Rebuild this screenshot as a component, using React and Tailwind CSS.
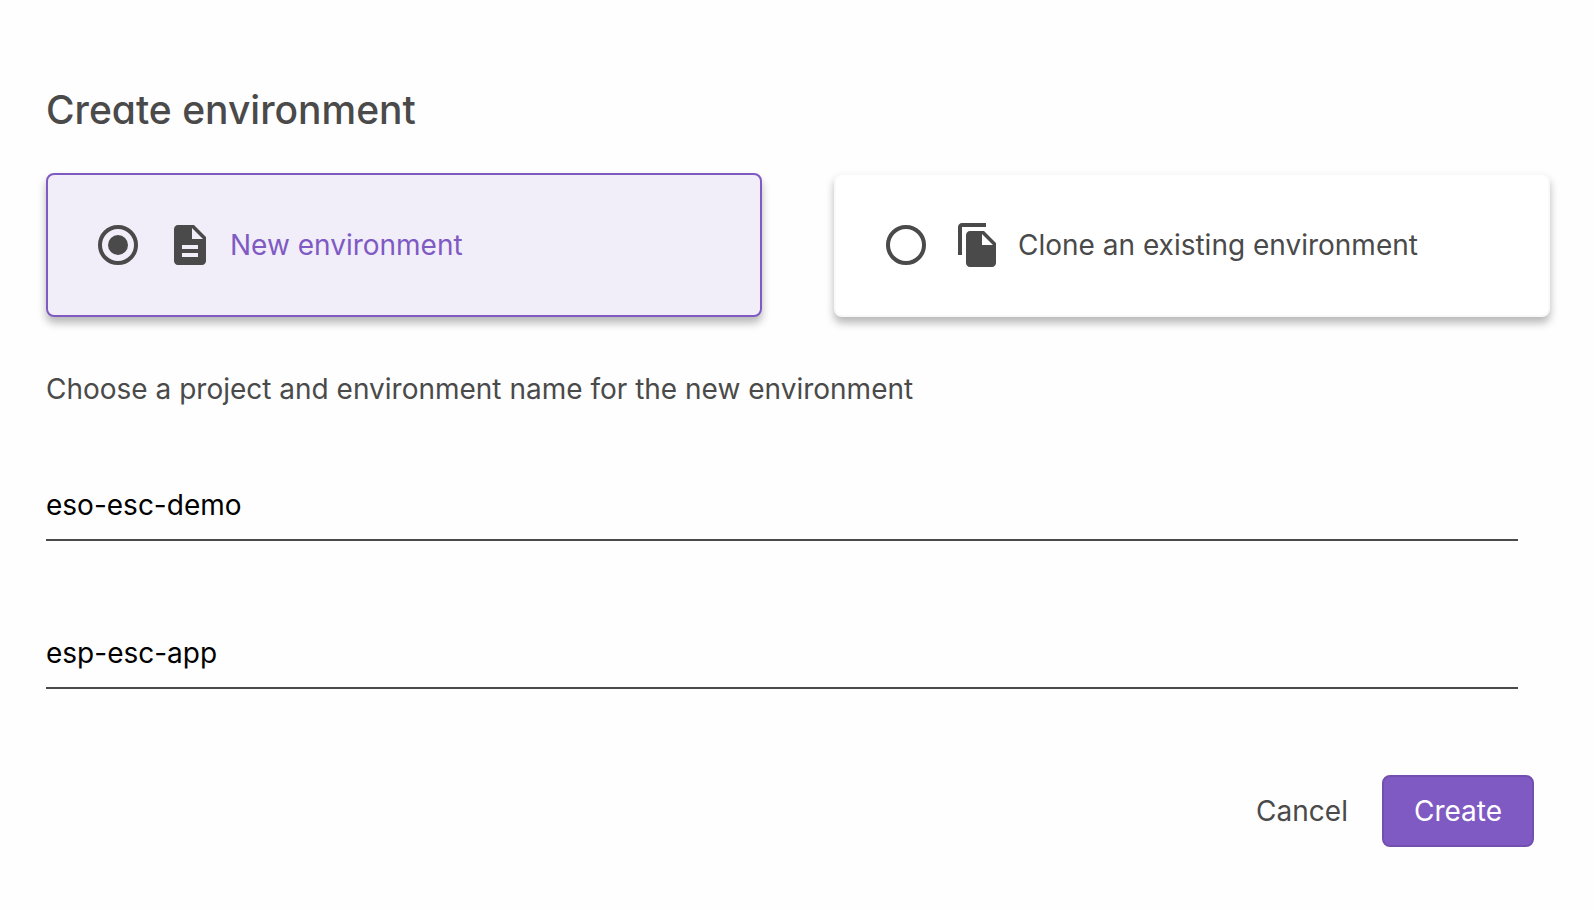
import { useState } from "react";
import { MdDescription, MdFileCopy } from "react-icons/md";

const MODES = [
  { id: "new", label: "New environment", Icon: MdDescription },
  { id: "clone", label: "Clone an existing environment", Icon: MdFileCopy },
];

function ModeCard({ mode, checked, onSelect }) {
  const { id, label, Icon } = mode;
  return (
    <label
      className={`flex flex-1 cursor-pointer items-center rounded-lg border-2 p-[46px] shadow-[0_6px_8px_0_rgba(0,0,0,0.28)] ${
        checked ? "border-[#805ac3] bg-[#f1eefa] text-[#805ac3]" : "border-[#f9f9f9] bg-white text-[#4a4a4a]"
      }`}
    >
      <input
        type="radio"
        name="mode"
        value={id}
        checked={checked}
        onChange={() => onSelect(id)}
        className="m-1 size-10 shrink-0 appearance-none rounded-full border-4 border-[#4a4a4a] bg-clip-content p-1.5 checked:bg-[#4a4a4a]"
      />
      <Icon className="ml-6 size-12 shrink-0 text-[#4a4a4a]" aria-hidden="true" />
      <span className="ml-4">{label}</span>
    </label>
  );
}

function Field({ label, value, onChange }) {
  return (
    <input
      type="text"
      aria-label={label}
      value={value}
      onChange={(e) => onChange(e.target.value)}
      className="block h-18 w-full border-b-2 border-[#4a4a4a] bg-transparent pt-0.5 text-black outline-none"
    />
  );
}

export default function App() {
  const [mode, setMode] = useState("new");
  const [project, setProject] = useState("eso-esc-demo");
  const [name, setName] = useState("esp-esc-app");

  return (
    <form
      onSubmit={(e) => e.preventDefault()}
      className="min-h-screen bg-[#fefefe] pt-[86px] pr-11 pl-[46px] font-['Inter',sans-serif] text-[28px] leading-10 text-[#4a4a4a]"
    >
      <h1 className="text-[39px] leading-12 font-medium [font-feature-settings:'cv11']">Create environment</h1>
      <div className="mt-[39px] flex gap-18">
        {MODES.map((m) => (
          <ModeCard key={m.id} mode={m} checked={mode === m.id} onSelect={setMode} />
        ))}
      </div>
      <p className="mt-13">Choose a project and environment name for the new environment</p>
      <div className="mt-15 mr-8 flex flex-col gap-19">
        <Field label="Project" value={project} onChange={setProject} />
        <Field label="Environment name" value={name} onChange={setName} />
      </div>
      <div className="mt-[86px] mr-4 flex justify-end">
        <button type="button" className="h-18 px-[34px]">
          Cancel
        </button>
        <button type="submit" className="h-18 rounded-lg border-2 border-[#734fb0] bg-[#805ac3] px-[30px] text-white">
          Create
        </button>
      </div>
    </form>
  );
}
